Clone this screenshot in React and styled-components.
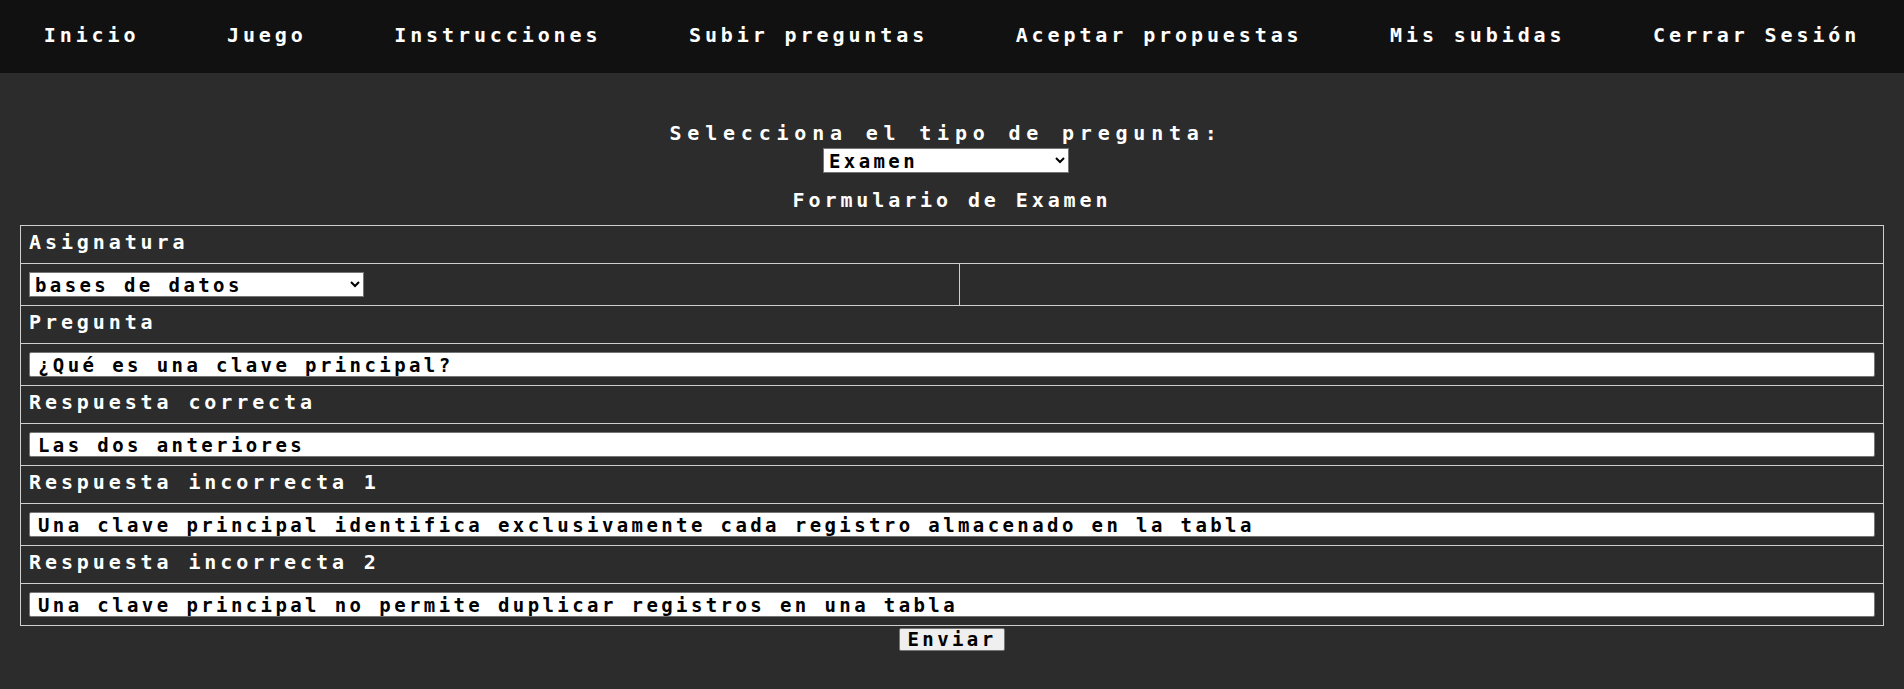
import React from 'react';
import styled, { createGlobalStyle } from 'styled-components';

const GlobalStyle = createGlobalStyle`
  html, body {
    margin: 0;
    padding: 0;
    background: #2c2c2c;
    font-family: "DejaVu Sans Mono", "Liberation Mono", monospace;
    font-weight: bold;
    color: #ffffff;
  }
`

const NAV_ITEMS = [
  'Inicio',
  'Juego',
  'Instrucciones',
  'Subir preguntas',
  'Aceptar propuestas',
  'Mis subidas',
  'Cerrar Sesión'
]

const FIELDS = [
  { label: 'Pregunta', value: '¿Qué es una clave principal?' },
  { label: 'Respuesta correcta', value: 'Las dos anteriores' },
  { label: 'Respuesta incorrecta 1', value: 'Una clave principal identifica exclusivamente cada registro almacenado en la tabla' },
  { label: 'Respuesta incorrecta 2', value: 'Una clave principal no permite duplicar registros en una tabla' }
]

class App extends React.Component {

  constructor (props) {
    super(props)
    this.state = { tipo: 'examen', asignatura: 'bd' }
  }

  _nav () {
    return (
      <NavBar>
        { NAV_ITEMS.map((item) => <NavLink key={item} href='#'>{item}</NavLink>) }
      </NavBar>
    )
  }

  _fieldRows () {
    return FIELDS.map((f) => (
      <React.Fragment key={f.label}>
        <tr><LabelCell colSpan={2}>{f.label}</LabelCell></tr>
        <tr>
          <FieldCell colSpan={2}>
            <TextInput type='text' defaultValue={f.value} />
          </FieldCell>
        </tr>
      </React.Fragment>
    ))
  }

  render () {
    return (
      <div>
        <GlobalStyle />
        { this._nav() }
        <Main>
          <TypePicker>
            <Heading>Selecciona el tipo de pregunta:</Heading>
            <Select
              $w={246}
              value={this.state.tipo}
              onChange={(e) => this.setState({ tipo: e.target.value })}
            >
              <option value='examen'>Examen</option>
              <option value='test'>Test</option>
            </Select>
          </TypePicker>
          <FormTitle>Formulario de Examen</FormTitle>
          <FormTable>
            <colgroup>
              <Col $w={939} />
              <col />
            </colgroup>
            <tbody>
              <tr><LabelCell colSpan={2}>Asignatura</LabelCell></tr>
              <tr>
                <FieldCell>
                  <Select
                    $w={335}
                    value={this.state.asignatura}
                    onChange={(e) => this.setState({ asignatura: e.target.value })}
                  >
                    <option value='bd'>bases de datos</option>
                    <option value='so'>sistemas operativos</option>
                  </Select>
                </FieldCell>
                <FieldCell />
              </tr>
              { this._fieldRows() }
            </tbody>
          </FormTable>
          <SubmitRow>
            <SubmitButton type='button'>Enviar</SubmitButton>
          </SubmitRow>
        </Main>
      </div>
    )
  }
}

const NavBar = styled.nav`
  box-sizing: border-box;
  height: 73px;
  padding-bottom: 4px;
  background: #111111;
  display: flex;
  align-items: center;
  justify-content: space-around;
`

const NavLink = styled.a`
  color: #ffffff;
  text-decoration: none;
  font-size: 20px;
  letter-spacing: 3.9px;
  line-height: 22px;
`

const Main = styled.div`
  padding: 49px 20px 0;
`

const TypePicker = styled.div`
  display: flex;
  flex-direction: column;
  align-items: center;
  gap: 4px;
  padding-right: 12px;
`

const Heading = styled.div`
  font-size: 20px;
  letter-spacing: 5.8px;
  line-height: 22px;
`

const Select = styled.select`
  width: ${p => p.$w}px;
  height: 25px;
  background: #ffffff;
  color: #000000;
  border: 1px solid #767676;
  border-radius: 0;
  padding: 0 1px;
  font-family: "DejaVu Sans Mono", "Liberation Mono", monospace;
  font-weight: bold;
  font-size: 19px;
  letter-spacing: 3.4px;
`

const FormTitle = styled.div`
  margin-top: 16px;
  text-align: center;
  font-size: 20px;
  letter-spacing: 3.9px;
  line-height: 22px;
`

const FormTable = styled.table`
  margin-top: 14px;
  width: 100%;
  border-collapse: collapse;
  table-layout: fixed;
  border: 1px solid #cfcfcf;
`

const Col = styled.col`
  width: ${p => p.$w}px;
`

const LabelCell = styled.td`
  border: 1px solid #cfcfcf;
  padding: 5px 8px 10px;
  font-size: 20px;
  letter-spacing: 3.9px;
  line-height: 22px;
`

const FieldCell = styled.td`
  border: 1px solid #cfcfcf;
  padding: 8px;
  height: 25px;
`

const TextInput = styled.input`
  display: block;
  box-sizing: border-box;
  width: 100%;
  height: 25px;
  padding: 0 8px;
  background: #ffffff;
  color: #000000;
  border: 1px solid #767676;
  border-radius: 2px;
  font-family: "DejaVu Sans Mono", "Liberation Mono", monospace;
  font-weight: bold;
  font-size: 19px;
  letter-spacing: 3.4px;
`

const SubmitRow = styled.div`
  display: flex;
  justify-content: center;
  margin-top: 2px;
`

const SubmitButton = styled.button`
  height: 23px;
  padding: 0 7px;
  background: #efefef;
  color: #000000;
  border: 1px solid #767676;
  border-radius: 2px;
  font-family: "DejaVu Sans Mono", "Liberation Mono", monospace;
  font-weight: bold;
  font-size: 19px;
  letter-spacing: 3.4px;
  line-height: 21px;
`

export default App;
